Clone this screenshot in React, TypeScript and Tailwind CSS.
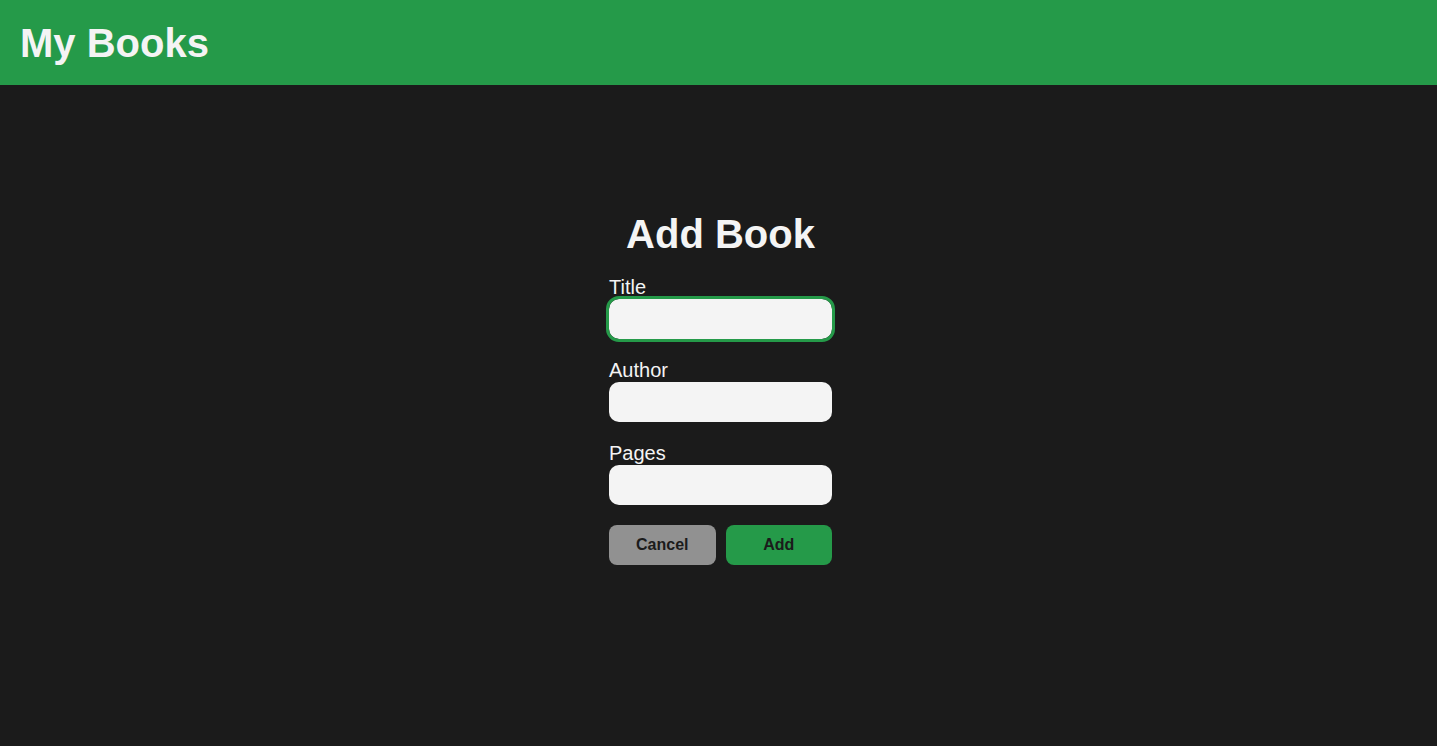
import React from 'react';

const Field: React.FC<{ label: string; focused?: boolean }> = ({ label, focused }) => (
  <label className="flex flex-col">
    <span className="text-[20px] leading-[23px] text-[#f4f4f4]">{label}</span>
    <input
      type="text"
      className={
        'h-10 w-full rounded-[10px] bg-[#f4f4f4] px-3 text-base text-[#1b1b1b] outline-none ' +
        (focused ? 'outline-3 outline-offset-0 outline-solid outline-[#259a49]' : '')
      }
    />
  </label>
);

const App: React.FC = () => {
  return (
    <div className="min-h-[746px] bg-[#1b1b1b] font-['Liberation_Sans',Arial,sans-serif]">
      <header className="flex h-[85px] items-center bg-[#259a49] px-5">
        <h1 className="text-[40px] font-bold leading-[46px] text-[#f4f4f4]">My Books</h1>
      </header>
      <main className="flex justify-center pl-1 pt-[126px]">
        <form className="flex w-[223px] flex-col" onSubmit={(e) => e.preventDefault()}>
          <h2 className="mb-[19px] whitespace-nowrap text-center text-[40px] font-bold leading-[46px] text-[#f4f4f4]">
            Add Book
          </h2>
          <div className="flex flex-col gap-5">
            <Field label="Title" focused />
            <Field label="Author" />
            <Field label="Pages" />
            <div className="flex gap-[10px]">
              <button
                type="button"
                className="h-10 flex-1 rounded-[8px] bg-[#919191] text-base font-bold text-[#1b1b1b]"
              >
                Cancel
              </button>
              <button
                type="submit"
                className="h-10 flex-1 rounded-[8px] bg-[#259a49] text-base font-bold text-[#1b1b1b]"
              >
                Add
              </button>
            </div>
          </div>
        </form>
      </main>
    </div>
  );
};

export default App;
